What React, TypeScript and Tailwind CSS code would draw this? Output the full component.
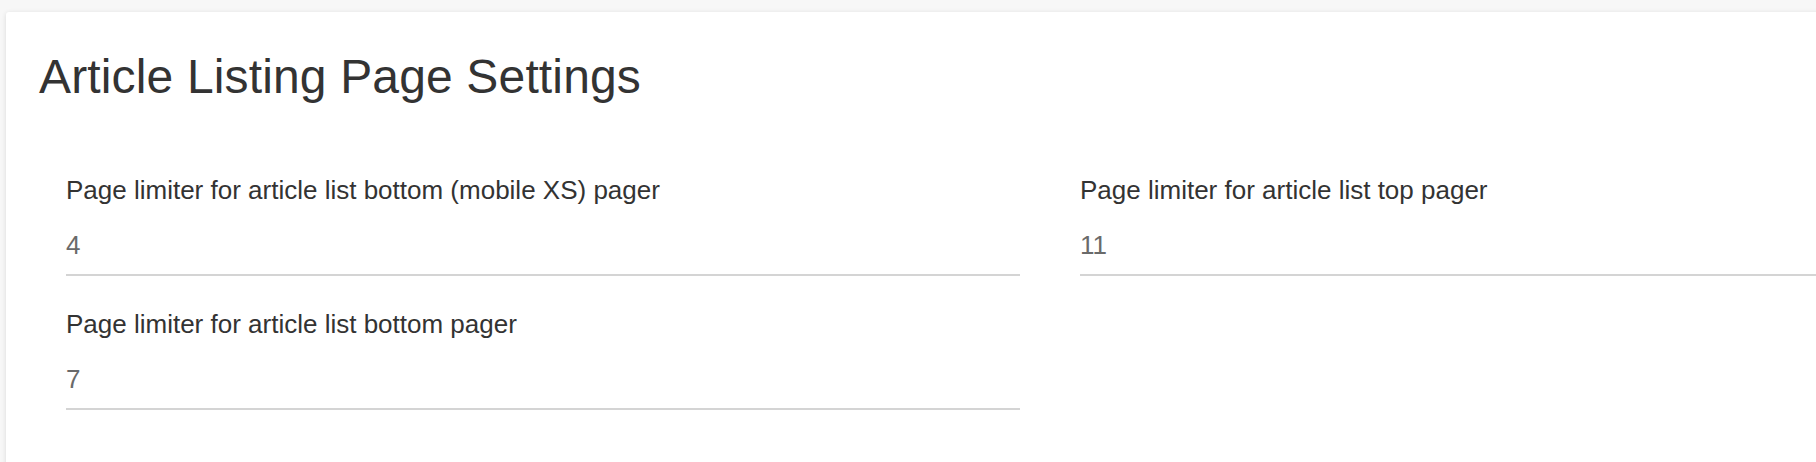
const fields = [
  { label: "Page limiter for article list bottom (mobile XS) pager", value: "4" },
  { label: "Page limiter for article list top pager", value: "11" },
  { label: "Page limiter for article list bottom pager", value: "7" },
];

const Field = ({ label, value }: { label: string; value: string }) => {
  return (
    <div className="flex flex-col">
      <label className="text-[26px] leading-[26px] text-[#333333] whitespace-nowrap">{label}</label>
      <div className="mt-[29px] pb-[16px] border-b-2 border-[#d4d4d4] text-[26px] leading-[26px] text-[#6a6a6a]">
        {value}
      </div>
    </div>
  );
};

const App = () => {
  return (
    <div
      className="w-full h-[462px] overflow-hidden bg-[#f7f7f7] pt-[12px] pl-[6px]"
      style={{ fontFamily: '"Liberation Sans", Arial, sans-serif' }}
    >
      <div className="w-[2100px] h-[600px] bg-white rounded-[3px] shadow-[0_1px_5px_rgba(0,0,0,0.12)] pt-[41px] px-[33px]">
        <h1 className="text-[48px] leading-[48px] font-normal tracking-[0.15px] text-[#333333]">
          Article Listing Page Settings
        </h1>

        <div className="mt-[76px] ml-[27px] grid grid-cols-[954px_954px] gap-x-[60px] gap-y-[35px]">
          {fields.map((f) => (
            <Field key={f.label} label={f.label} value={f.value} />
          ))}
        </div>
      </div>
    </div>
  );
};

export default App;
